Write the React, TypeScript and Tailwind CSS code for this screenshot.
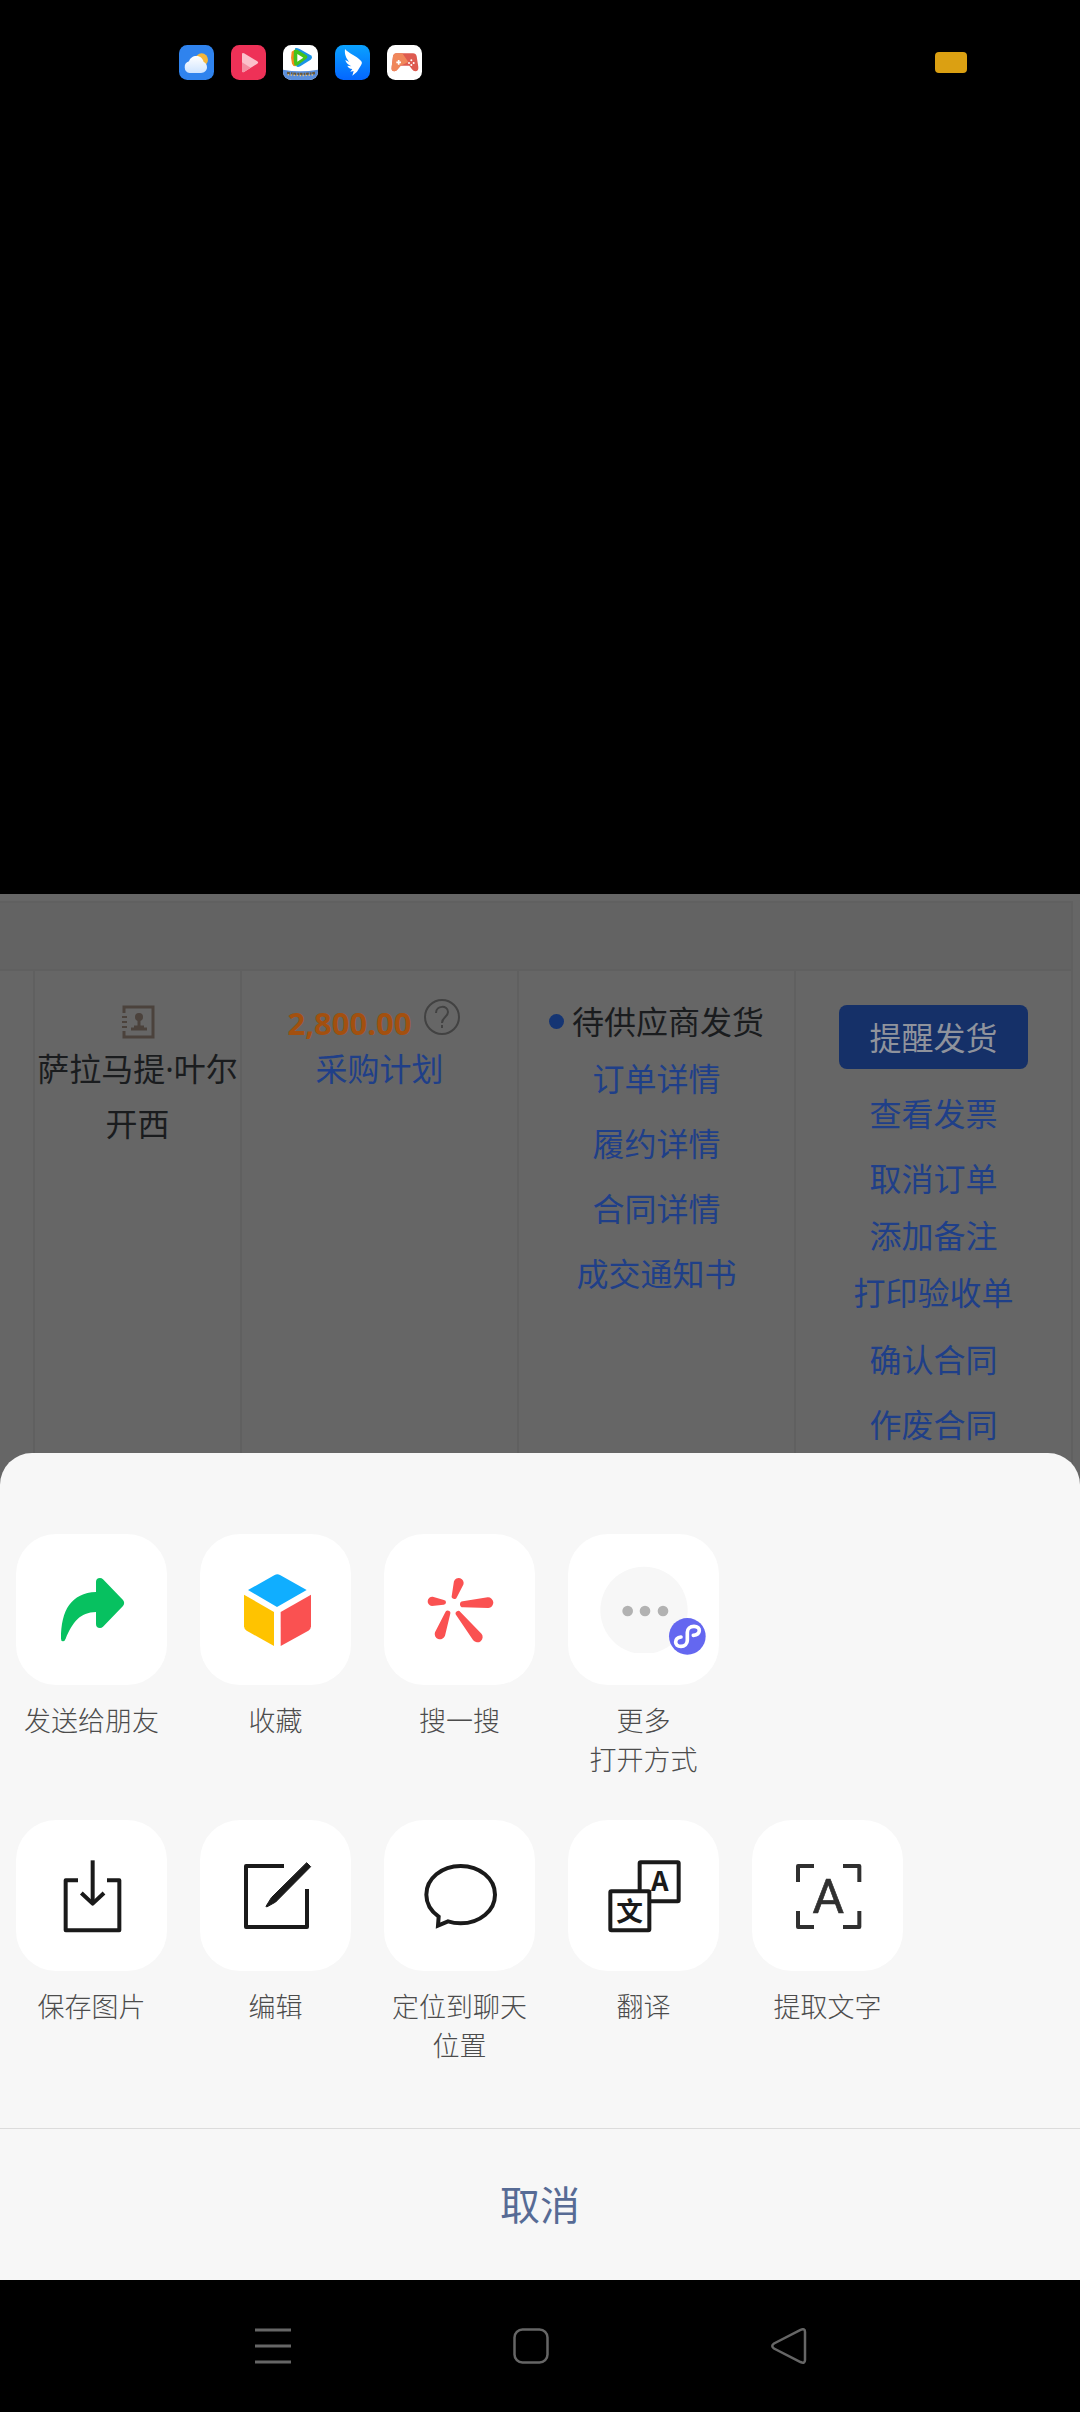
import type { ReactNode } from 'react'

interface Action {
  label: string
  icon: ReactNode
}

interface PetalProps {
  from: [number, number]
  to: [number, number]
  r1: number
  r2: number
}

// Tapered capsule running from a wide end to a narrow end
function Petal({ from, to, r1, r2 }: PetalProps) {
  const dx = to[0] - from[0]
  const dy = to[1] - from[1]
  const len = Math.hypot(dx, dy)
  const nx = -dy / len
  const ny = dx / len
  const d = [
    `M${from[0] + nx * r1} ${from[1] + ny * r1}`,
    `A${r1} ${r1} 0 1 1 ${from[0] - nx * r1} ${from[1] - ny * r1}`,
    `L${to[0] - nx * r2} ${to[1] - ny * r2}`,
    `A${r2} ${r2} 0 0 1 ${to[0] + nx * r2} ${to[1] + ny * r2}Z`,
  ].join(' ')
  return <path d={d} />
}

function TileSvg({ children }: { children: ReactNode }) {
  return (
    <svg viewBox="0 0 453 453" className="size-full" fill="none" aria-hidden="true">
      {children}
    </svg>
  )
}

const shareActions: Action[] = [
  {
    label: '发送给朋友',
    icon: (
      <TileSvg>
        <path
          fill="#07c160"
          d="M240 144q0-12 12-12 5 0 9 4l60 62q7 9 0 18l-60 62q-4 4-9 4-12 0-12-12V234C192 235 170 264 149 314q-3 8-8 8-6 0-6-8C135 228 166 177 240 174Z"
        />
      </TileSvg>
    ),
  },
  {
    label: '收藏',
    icon: (
      <TileSvg>
        <path fill="#10aeff" d="M144 168 224 123q8-5 16 0l80 45-89 51Z" />
        <path fill="#ffc300" d="m132 182 90 52v102l-82-46q-8-5-8-13Z" />
        <path fill="#fa5151" d="m333 182-91 52v102l83-46q8-5 8-13Z" />
      </TileSvg>
    ),
  },
  {
    label: '搜一搜',
    icon: (
      <TileSvg>
        <g fill="#fa5151">
          <Petal from={[224, 147]} to={[211, 187]} r1={15} r2={8} />
          <Petal from={[145, 202]} to={[179, 205]} r1={14} r2={7} />
          <Petal from={[312, 206]} to={[237, 211]} r1={16} r2={9} />
          <Petal from={[168, 300]} to={[191, 238]} r1={16} r2={8} />
          <Petal from={[280, 309]} to={[223, 239]} r1={16} r2={8} />
        </g>
      </TileSvg>
    ),
  },
  {
    label: '更多\n打开方式',
    icon: (
      <TileSvg>
        <path fill="#f7f7f7" d="M200 357a131 131 0 1 1 56 0Z" />
        <g fill="#b2b2b2">
          <circle cx="179" cy="231" r="16" />
          <circle cx="231" cy="231" r="16" />
          <circle cx="285" cy="231" r="16" />
        </g>
        <circle cx="358" cy="307" r="55" fill="#6467f0" />
        <path
          stroke="#fff"
          strokeWidth="11"
          strokeLinecap="round"
          d="M376 304c23-2 24-27 2-27-12 0-20 8-20 18v24c0 10-8 18-19 18-22 0-21-25 0-28"
        />
      </TileSvg>
    ),
  },
]

const imageActions: Action[] = [
  {
    label: '保存图片',
    icon: (
      <TileSvg>
        <g stroke="#1a1a1a" strokeWidth="12" strokeLinejoin="round">
          <path d="M186 181h-37v150h161V181h-37" />
          <path d="M230 121v127" />
          <path d="m196 219 34 32 34-32" />
        </g>
      </TileSvg>
    ),
  },
  {
    label: '编辑',
    icon: (
      <TileSvg>
        <path
          stroke="#1a1a1a"
          strokeWidth="12"
          strokeLinejoin="round"
          d="M252 138H138v183h183V207"
        />
        <path
          fill="#1a1a1a"
          stroke="#1a1a1a"
          strokeWidth="3"
          strokeLinejoin="round"
          d="m320 128 12 12-105 106-27 15-2-2 16-26Z"
        />
      </TileSvg>
    ),
  },
  {
    label: '定位到聊天位置',
    icon: (
      <TileSvg>
        <path
          stroke="#1a1a1a"
          strokeWidth="12"
          d="M164 290c-22-16-37-39-37-66 0-48 46-86 103-86s103 38 103 86-46 86-103 86c-14 0-26-2-38-6l-30 13Z"
        />
      </TileSvg>
    ),
  },
  {
    label: '翻译',
    icon: (
      <TileSvg>
        <g fill="#fff" stroke="#1a1a1a" strokeWidth="12">
          <rect x="215" y="127" width="117" height="117" rx="3" />
          <rect x="127" y="214" width="117" height="117" rx="3" />
        </g>
        <g fill="#1a1a1a" textAnchor="middle" fontWeight="700">
          <text x="275" y="213" fontSize="82" fontFamily="'Noto Sans CJK SC', sans-serif">A</text>
          <text x="185" y="302" fontSize="80" fontFamily="'Noto Sans CJK SC', sans-serif">文</text>
        </g>
      </TileSvg>
    ),
  },
  {
    label: '提取文字',
    icon: (
      <TileSvg>
        <path
          stroke="#303030"
          strokeWidth="12"
          strokeLinejoin="round"
          d="M138 186v-48h48M273 138h49v48M322 273v48h-49M186 321h-48v-48"
        />
        <text
          x="229"
          y="279"
          fill="#303030"
          stroke="#303030"
          strokeWidth="2"
          fontSize="145"
          fontWeight="400"
          textAnchor="middle"
          fontFamily="Roboto, sans-serif"
        >
          A
        </text>
      </TileSvg>
    ),
  },
]

function ActionRow({ actions }: { actions: Action[] }) {
  return (
    <ul className="flex gap-[33px] px-4">
      {actions.map((action) => (
        <li key={action.label} className="w-[151px] shrink-0">
          <button type="button" className="flex w-full flex-col items-center gap-4">
            <span className="block size-[151px] rounded-[40px] bg-white">{action.icon}</span>
            <span className="h-[78px] whitespace-pre-line text-[27px] leading-[39px] font-light text-[#4c4c4c]">
              {action.label}
            </span>
          </button>
        </li>
      ))}
    </ul>
  )
}

function StatusBar() {
  return (
    <header className="flex items-center justify-between pt-[45px] pr-[113px] pl-[179px]">
      <div className="flex gap-[17px]">
        {/* Weather */}
        <svg viewBox="0 0 105 105" className="size-[35px]" aria-hidden="true">
          <defs>
            <linearGradient id="cloud" x1="0" y1="0" x2="0" y2="1">
              <stop offset="0" stopColor="#ffffff" />
              <stop offset="1" stopColor="#cfe4ff" />
            </linearGradient>
          </defs>
          <rect width="105" height="105" rx="25" fill="#2f83ee" />
          <circle cx="68" cy="44" r="19" fill="#f5b73c" />
          <path
            fill="url(#cloud)"
            d="M32 84a18 18 0 0 1-2-35c3-10 12-16 22-16 12 0 20 8 22 18 6 2 10 8 10 16 0 10-8 17-18 17Z"
          />
        </svg>
        {/* Video player */}
        <svg viewBox="0 0 105 105" className="size-[35px]" aria-hidden="true">
          <rect width="105" height="105" rx="25" fill="#ee3157" />
          <path fill="#fbc0cb" d="M33 28q0-6 6-3l40 24q5 4 0 7L39 81q-6 2-6-4Z" />
          <path fill="#f58ea2" d="m33 52 26 16-20 13q-6 2-6-4Z" />
        </svg>
        {/* Streaming */}
        <svg viewBox="0 0 105 105" className="size-[35px]" aria-hidden="true">
          <defs>
            <clipPath id="streaming">
              <rect width="105" height="105" rx="25" />
            </clipPath>
          </defs>
          <g clipPath="url(#streaming)">
            <rect width="105" height="105" fill="#fff" />
            <path fill="#f58a1c" d="M26 20q8-8 18-4L38 64q-8 0-11-8-5-18-1-36Z" />
            <path fill="#1a94e6" d="M36 10q4-3 14 2l33 19q8 6 0 13L52 64q-8 4-12 0Z" />
            <path fill="#45c31a" d="M33 16q3-5 11-1l26 16q6 5 0 10L44 61q-7 3-10-2-4-20-1-43Z" />
            <path fill="#fff" d="m43 27 18 11-18 12Z" />
            <path fill="#5b8fdc" d="M0 74q50 10 105 0v31H0Z" />
            <path
              stroke="#6b5a3a"
              strokeWidth="7"
              strokeDasharray="9 3 5 2"
              fill="none"
              d="M12 84q40 6 84 0"
            />
            <path
              stroke="#e8c27a"
              strokeWidth="4"
              strokeDasharray="4 5"
              fill="none"
              d="M14 89q40 5 80 0"
            />
          </g>
        </svg>
        {/* Messenger wing */}
        <svg viewBox="0 0 105 105" className="size-[35px]" aria-hidden="true">
          <defs>
            <linearGradient id="wing" x1="0" y1="0" x2="0" y2="1">
              <stop offset="0" stopColor="#0aa2ff" />
              <stop offset="1" stopColor="#0466ff" />
            </linearGradient>
          </defs>
          <rect width="105" height="105" rx="25" fill="url(#wing)" />
          <path
            fill="#fff"
            d="M30 12c12 14 34 20 46 34 6 5 6 9 2 15L66 80l-14 12 4-14-10 2 6-8c-8 0-13-5-15-10l12 2c-10-5-17-12-18-19l12 6c-9-10-15-22-13-39Z"
          />
        </svg>
        {/* Game center */}
        <svg viewBox="0 0 105 105" className="size-[35px]" aria-hidden="true">
          <rect width="105" height="105" rx="25" fill="#fff" />
          <path
            fill="#de5b50"
            d="M28 25h50q9 0 11 9l5 32q1 13-9 13-6 0-10-6l-8-11H41l-9 11q-4 6-10 6-10 0-8-13l4-32q2-9 10-9Z"
          />
          <path
            fill="#f0875b"
            d="M28 25h18l18 26-23 11-9 11q-4 6-10 6-10 0-8-13l4-32q2-9 10-9Z"
          />
          <path stroke="#fff" strokeWidth="5" d="M28 52h14M35 45v14" />
          <g fill="#fff">
            <circle cx="73" cy="46" r="3" />
            <circle cx="66" cy="54" r="3" />
            <circle cx="80" cy="54" r="3" />
            <circle cx="73" cy="60" r="3" />
          </g>
        </svg>
      </div>
      <div className="h-[21px] w-8 rounded-[4px] bg-[#dba012]" />
    </header>
  )
}

function OrderLink({ children, className = 'h-[57px]' }: { children: string; className?: string }) {
  return (
    <li className={className}>
      <a href="#" className="text-[#1f3f88]">
        {children}
      </a>
    </li>
  )
}

// The photo being viewed, already darkened by the sheet's backdrop
function OrderTable() {
  return (
    <div className="bg-[#666666] pt-[7px]">
      <table className="w-full table-fixed border-collapse text-center text-[32px] leading-[57px]">
        <colgroup>
          <col className="w-[34px]" />
          <col className="w-[207px]" />
          <col className="w-[277px]" />
          <col className="w-[277px]" />
          <col className="w-[277px]" />
          <col className="w-2" />
        </colgroup>
        <thead>
          <tr className="h-[68px]">
            <th colSpan={5} className="border-2 border-l-0 border-[#606060] bg-[#636363]" />
            <td />
          </tr>
        </thead>
        <tbody>
          <tr className="h-[519px] align-top">
            <td />
            <td className="border-x-2 border-[#606060] pt-[34px] text-[#1a1c1e]">
              <svg viewBox="0 0 34 34" className="mx-auto size-[34px]" fill="none" aria-hidden="true">
                <path stroke="#4b423c" strokeWidth="3" d="M3 8V2h29v30H3v-6" />
                <path stroke="#4b423c" strokeWidth="2" d="M1 12h5M1 17h5M1 22h5" />
                <circle cx="18" cy="12" r="4" fill="#4b423c" />
                <path stroke="#4b423c" strokeWidth="3" d="M18 14v8M10 24h16M13 22h10" />
              </svg>
              <p className="pt-0.5 leading-[55px]">萨拉马提·叶尔开西</p>
            </td>
            <td className="border-x-2 border-[#606060] pt-7">
              <div className="flex items-start justify-center gap-3 pr-3">
                <span className="pt-1 font-[Open_Sans] text-[31px] leading-10 font-bold text-[#a3500f]">
                  2,800.00
                </span>
                <svg viewBox="0 0 36 36" className="size-9" fill="none" aria-hidden="true">
                  <circle cx="18" cy="18" r="17" stroke="#424242" strokeWidth="2" />
                  <path
                    stroke="#424242"
                    strokeWidth="2"
                    d="M12 14c0-8 12-8 12-1 0 5-6 5-6 11M18 26v3"
                  />
                </svg>
              </div>
              <a href="#" className="block leading-[52px] text-[#1f3f88]">
                采购计划
              </a>
            </td>
            <td className="border-x-2 border-[#606060] pt-[22px]">
              <p className="flex items-center justify-center gap-2">
                <span className="size-[15px] rounded-full bg-[#153573]" />
                <span className="text-[#1a1c1e]">待供应商发货</span>
              </p>
              <ul>
                <OrderLink className="h-[65px]">订单详情</OrderLink>
                <OrderLink className="h-[65px]">履约详情</OrderLink>
                <OrderLink className="h-[65px]">合同详情</OrderLink>
                <OrderLink>成交通知书</OrderLink>
              </ul>
            </td>
            <td className="border-x-2 border-[#606060] pt-[34px]">
              <button
                type="button"
                className="mx-auto mb-4 block h-16 w-[189px] rounded-lg bg-[#153068] text-[#8f939c]"
              >
                提醒发货
              </button>
              <ul>
                <OrderLink className="h-[65px]">查看发票</OrderLink>
                <OrderLink>取消订单</OrderLink>
                <OrderLink>添加备注</OrderLink>
                <OrderLink className="h-[67px]">打印验收单</OrderLink>
                <OrderLink className="h-[65px]">确认合同</OrderLink>
                <OrderLink>作废合同</OrderLink>
              </ul>
            </td>
            <td />
          </tr>
        </tbody>
      </table>
    </div>
  )
}

function NavBar() {
  return (
    <nav className="flex h-[132px] items-center justify-center gap-[222px] pr-[18px]">
      <button type="button" aria-label="最近任务">
        <svg viewBox="0 0 36 36" className="size-9" aria-hidden="true">
          <path stroke="#666" strokeWidth="3" d="M0 2h36M0 18h36M0 34h36" />
        </svg>
      </button>
      <button type="button" aria-label="主屏幕">
        <svg viewBox="0 0 36 36" className="size-9" fill="none" aria-hidden="true">
          <rect x="1.5" y="1.5" width="33" height="33" rx="8" stroke="#666" strokeWidth="2.5" />
        </svg>
      </button>
      <button type="button" aria-label="返回">
        <svg viewBox="0 0 36 36" className="size-9" fill="none" aria-hidden="true">
          <path
            stroke="#666"
            strokeWidth="2.5"
            d="M3 15.500 29.500 1.800Q34 0 34 4V32Q34 36 29.500 34L3 20.500Q-.5 18 3 15.500Z"
          />
        </svg>
      </button>
    </nav>
  )
}

export default function App() {
  return (
    <div className="flex min-h-screen flex-col bg-black font-['Noto_Sans','Noto_Sans_CJK_SC',sans-serif]">
      <StatusBar />
      <main className="flex flex-1 flex-col justify-end">
        <OrderTable />
        <section className="relative -mt-9 rounded-t-[32px] bg-[#f7f7f7] pt-[81px]">
          <div className="flex flex-col gap-[41px] pb-[63px]">
            <ActionRow actions={shareActions} />
            <ActionRow actions={imageActions} />
          </div>
          <button
            type="button"
            className="block h-[152px] w-full border-t border-[#dcdcdc] text-[40px] text-[#576b95]"
          >
            取消
          </button>
        </section>
      </main>
      <NavBar />
    </div>
  )
}
